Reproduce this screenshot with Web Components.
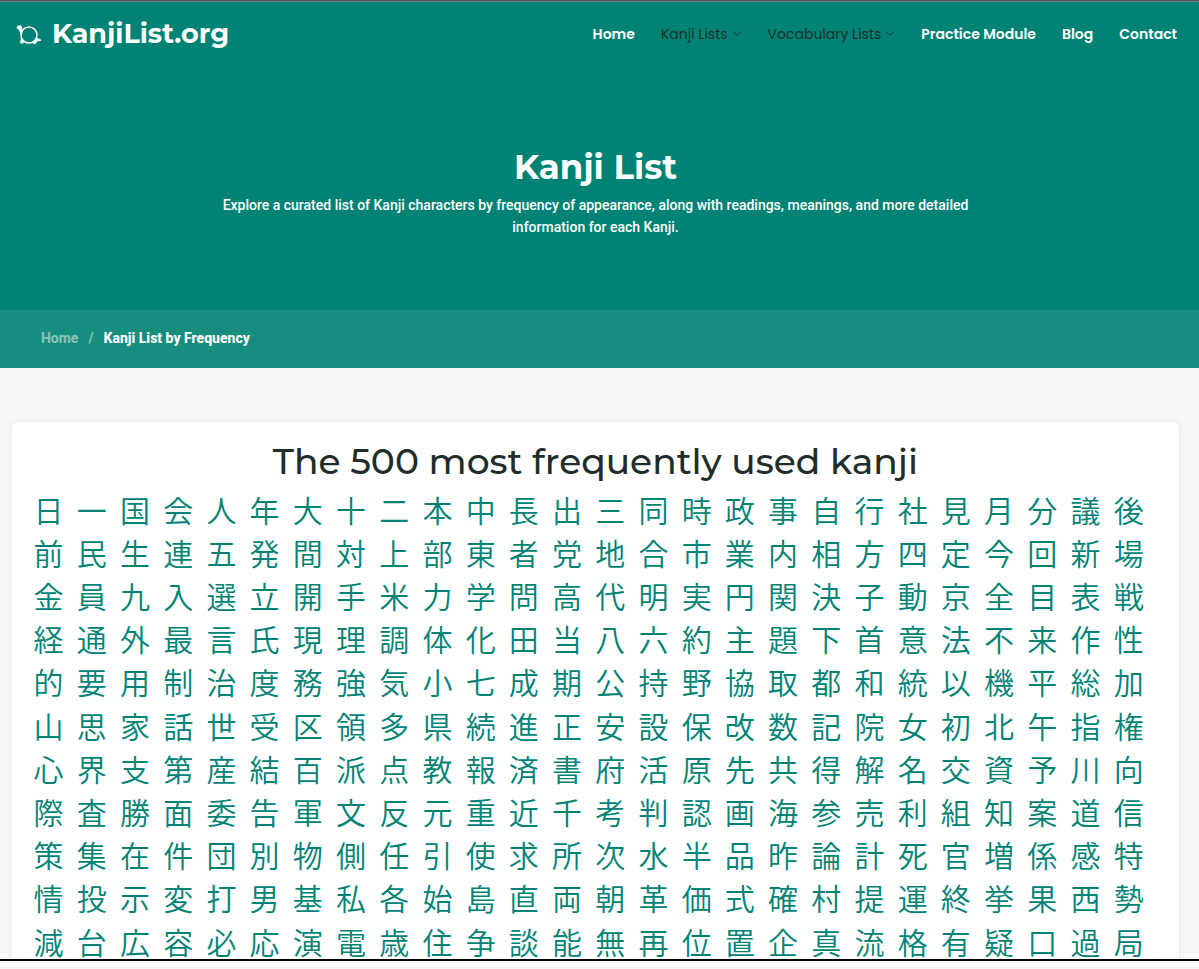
<!DOCTYPE html>
<html lang="en">
<head>
<meta charset="utf-8">
<meta name="viewport" content="width=device-width, initial-scale=1">
<title>Kanji List by Frequency</title>
<style>
html, body { margin: 0; height: 100%; }
body { background: #f8f8f8; font-family: Roboto, "Liberation Sans", sans-serif; --teal: #008374; --display: Montserrat, Inter, sans-serif; --nav: Poppins, Inter, sans-serif; }
</style>
</head>
<body>
<page-shell>
  <site-header>
    <nav-link href="#">Home</nav-link>
    <nav-link href="#" menu>Kanji Lists</nav-link>
    <nav-link href="#" menu>Vocabulary Lists</nav-link>
    <nav-link href="#">Practice Module</nav-link>
    <nav-link href="#">Blog</nav-link>
    <nav-link href="#">Contact</nav-link>
  </site-header>
  <page-hero heading="Kanji List">Explore a curated list of Kanji characters by frequency of appearance, along with readings, meanings, and more detailed information for each Kanji.</page-hero>
  <bread-crumbs>Kanji List by Frequency</bread-crumbs>
  <kanji-card heading="The 500 most frequently used kanji">
日一国会人年大十二本中長出三同時政事自行社見月分議後
前民生連五発間対上部東者党地合市業内相方四定今回新場
金員九入選立開手米力学問高代明実円関決子動京全目表戦
経通外最言氏現理調体化田当八六約主題下首意法不来作性
的要用制治度務強気小七成期公持野協取都和統以機平総加
山思家話世受区領多県続進正安設保改数記院女初北午指権
心界支第産結百派点教報済書府活原先共得解名交資予川向
際査勝面委告軍文反元重近千考判認画海参売利組知案道信
策集在件団別物側任引使求所次水半品昨論計死官増係感特
情投示変打男基私各始島直両朝革価式確村提運終挙果西勢
減台広容必応演電歳住争談能無再位置企真流格有疑口過局
  </kanji-card>
</page-shell>
<script>
const define = (name, render) => customElements.define(name, class extends HTMLElement {
  connectedCallback() {
    if (this.shadowRoot) return;
    this.attachShadow({ mode: 'open' }).innerHTML = render(this);
  }
});

define('page-shell', () => `
<style>
:host { display: flex; flex-direction: column; height: 100vh; box-sizing: border-box; padding-bottom: 8px; }
main { flex: 1; min-height: 0; overflow: hidden; border-top: 1px solid #46545c; border-bottom: 2px solid #000; }
</style>
<main><slot></slot></main>`);

define('site-header', () => `
<style>
:host { display: flex; align-items: center; justify-content: space-between; height: 64px; padding: 0 22px 0 16px; background: var(--teal); border-top: 1px solid #6f7f86; }
a { display: flex; align-items: center; gap: 10px; color: #fff; text-decoration: none; font: 700 27px/32px var(--display); }
svg { width: 26px; height: 24px; }
nav { display: flex; gap: 26px; }
</style>
<a href="#"><svg viewBox="0 0 26 24" fill="none" stroke="#fff" stroke-width="1.5" stroke-linecap="round" stroke-linejoin="round">
<circle cx="13" cy="13" r="8"/>
<path fill="#fff" d="M1.300 5.500Q2 4 3.500 4Q5.500 4.200 5.300 6.500L5.800 9 5 10.500 3.500 7.500Z"/>
<path fill="#fff" d="M5.500 17 4.800 20.500 6.200 21 7.800 19.500ZM17 20.500 18.500 21.500 20 20.500 19.500 18.500ZM20.500 16.500 24.500 18.300 20 18.800Z"/>
<path d="M4.500 9 5.500 12"/>
</svg>KanjiList.org</a>
<nav><slot></slot></nav>`);

define('nav-link', el => `
<style>
:host { display: block; }
a { display: flex; align-items: center; gap: 4px; color: #fff; text-decoration: none; font: 600 14px/24px var(--nav); }
:host([menu]) a { color: #1f2f2d; font-weight: 400; }
svg { width: 10px; height: 10px; }
</style>
<a href="${el.getAttribute('href')}"><slot></slot>${el.hasAttribute('menu') ? '<svg viewBox="0 0 10 10" fill="none" stroke="currentColor"><path d="M1 2.500 5 6.500 9 2.500"/></svg>' : ''}</a>`);

define('page-hero', el => `
<style>
:host { display: block; background: var(--teal); color: #fff; padding: 78px 24px 72px 16px; text-align: center; }
h1 { margin: 0 0 4px; font: 700 34px/46px var(--display); }
p { margin: 0 auto; max-width: 784px; font-size: 14px; font-weight: 500; line-height: 22px; }
</style>
<h1>${el.getAttribute('heading')}</h1><p><slot></slot></p>`);

define('bread-crumbs', () => `
<style>
:host { display: block; background: #178d7f; padding: 17px 41px 19px; font: 800 14px/22px Roboto, sans-serif; color: #fff; }
ol { display: flex; gap: 10px; margin: 0; padding: 0; list-style: none; }
a, .sep { color: #85c2ba; text-decoration: none; }
</style>
<nav aria-label="Breadcrumb"><ol><li><a href="#">Home</a></li><li class="sep" aria-hidden="true">/</li><li aria-current="page"><slot></slot></li></ol></nav>`);

define('kanji-card', el => `
<style>
:host { display: block; margin: 54px 20px 0 12px; padding: 14px 0; border-radius: 6px; background: #fff; box-shadow: 0 0 6px rgba(0,0,0,.09); }
h2 { margin: 0; text-align: center; color: #1f2d2b; font: 500 36px/51px var(--display); }
.list { display: grid; grid-template-columns: repeat(26, 1fr); padding: 0 29px 0 15px; font: 350 30px/1 "Noto Sans CJK JP", sans-serif; }
.list a { display: flex; align-items: center; justify-content: center; aspect-ratio: 1; color: var(--teal); text-decoration: none; }
</style>
<h2>${el.getAttribute('heading')}</h2>
<div class="list" lang="ja">${[...el.textContent.replace(/\s/g, '')].map(k => `<a href="#">${k}</a>`).join('')}</div>`);
</script>
</body>
</html>
